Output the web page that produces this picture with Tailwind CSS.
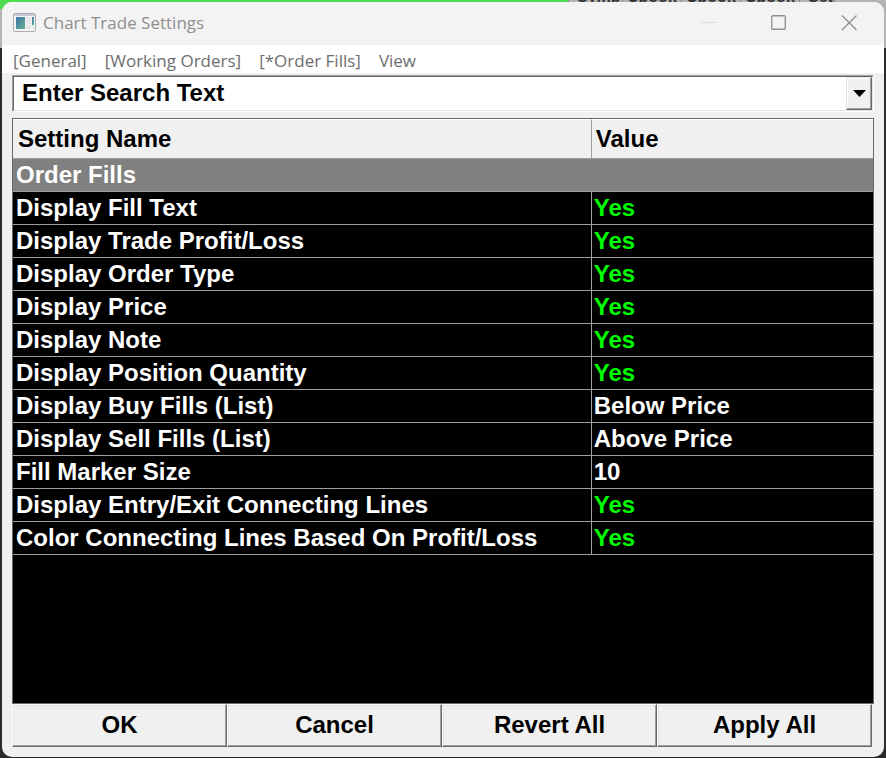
<!DOCTYPE html>
<html lang="en">
<head>
    <meta charset="UTF-8">
    <meta name="viewport" content="width=device-width, initial-scale=1.0">
    <title>Chart Trade Settings</title>
    <script src="https://cdn.jsdelivr.net/npm/@tailwindcss/browser@4"></script>
</head>
<body class="relative flex min-h-screen bg-[#2b2b2b] px-[2px] pt-[2px] pb-px font-['Liberation_Sans',Arial,sans-serif] text-black">
    <!-- application behind the dialog -->
    <div class="absolute inset-x-0 top-0 flex h-[48px] overflow-hidden bg-[#b4b4b4]" aria-hidden="true">
        <div class="h-[9px] w-[568px] bg-[#4fdc4f]"></div>
        <div class="-mt-[12px] flex h-[18px] flex-1 text-base leading-[18px] font-bold text-[#333]">
            <span class="w-[54px] border-l border-[#888] pl-2">Symb</span>
            <span class="w-[59px] border-l border-[#888] pl-1">Cbook</span>
            <span class="w-[59px] border-l border-[#888] pl-1">Cbook</span>
            <span class="w-[59px] border-l border-[#888] pl-1">Cbook</span>
            <span class="w-[36px] border-x border-[#888] pl-2">Set</span>
        </div>
    </div>

    <div class="relative flex flex-1 flex-col overflow-hidden rounded-[10px] bg-[#f0f0f0]">
        <header class="flex h-[43px] items-center bg-[#f3f3f3] pb-[2px] pl-[11px] font-['Open_Sans',sans-serif] text-[#8f8f8f]">
            <svg class="mr-[7px] h-[19px] w-[23px]" viewBox="0 0 23 19">
                <defs>
                    <linearGradient id="pane" x1="0" y1="0" x2="1" y2="1">
                        <stop offset="0" stop-color="#3f75ac"/>
                        <stop offset="1" stop-color="#62b292"/>
                    </linearGradient>
                </defs>
                <rect x="0.5" y="0.5" width="22" height="18" rx="1" fill="#f4f4f4" stroke="#a9adb2"/>
                <rect x="1" y="1" width="21" height="2" fill="#c5cbd1"/>
                <rect x="3" y="4" width="9" height="12" fill="url(#pane)"/>
                <rect x="13" y="4" width="5" height="7" fill="#e8e8e8"/>
                <rect x="13" y="12" width="5" height="4" fill="#e3e3e3"/>
                <rect x="19" y="4" width="2" height="8" fill="url(#pane)"/>
                <rect x="19" y="13" width="2" height="3" fill="#e3e3e3"/>
            </svg>
            <h1 class="flex-1 text-[17px] leading-6">Chart Trade Settings</h1>
            <button class="flex h-full w-[70px] items-center justify-center" aria-label="Minimize">
                <svg class="h-4 w-4" viewBox="0 0 16 16"><path d="M0.5 7.500h15" stroke="#dedede" fill="none"/></svg>
            </button>
            <button class="flex h-full w-[70px] items-center justify-center" aria-label="Maximize">
                <svg class="h-4 w-4" viewBox="0 0 16 16"><rect x="0.75" y="0.75" width="13.5" height="13.5" rx="1" fill="none" stroke="#8f8f8f" stroke-width="1.3"/></svg>
            </button>
            <button class="flex h-full w-[70px] items-center justify-center" aria-label="Close">
                <svg class="h-4 w-4" viewBox="0 0 16 16"><path d="M1 0.5l14.500 14.500M15.500 0.5l-14.500 14.500" stroke="#8f8f8f" stroke-width="1.3" fill="none"/></svg>
            </button>
        </header>

        <nav class="flex h-[28px] gap-[18px] bg-white pt-[4px] pl-[11px] font-['Open_Sans',sans-serif] text-[17px] leading-6 text-[#6d6d6d]">
            <button>[General]</button>
            <button>[Working Orders]</button>
            <button>[*Order Fills]</button>
            <button>View</button>
        </nav>

        <main class="flex flex-1 flex-col pt-[2px] pr-[10px] pb-[10px] pl-[10px] text-2xl font-bold">
            <div class="flex h-[37px] border border-t-[#a0a0a0] border-r-white border-b-white border-l-[#a0a0a0]">
                <div class="flex flex-1 border border-t-[#696969] border-r-[#e3e3e3] border-b-[#e3e3e3] border-l-[#696969] bg-white">
                    <input type="text" value="Enter Search Text" aria-label="Search settings" class="min-w-0 flex-1 pb-[2px] pl-[8px] leading-8 outline-none">
                    <button class="flex w-[26px] items-center justify-center border border-t-[#e3e3e3] border-r-[#696969] border-b-[#696969] border-l-[#e3e3e3] bg-[#f0f0f0] shadow-[inset_-1px_-1px_#a0a0a0,inset_1px_1px_#fff]" aria-label="Show search history">
                        <svg class="h-[7px] w-[13px]" viewBox="0 0 13 7"><path d="M0 0h13L6.5 7z"/></svg>
                    </button>
                </div>
            </div>

            <div class="mt-[6px] flex-1 border border-[#696969] bg-black">
                <table class="w-full table-fixed border-separate border-spacing-0 text-left text-white">
                    <thead class="bg-[#f0f0f0] text-black">
                        <tr class="h-[40px]">
                            <th class="w-[67.3%] border-t border-r border-b border-t-white border-r-[#a0a0a0] border-b-[#a0a0a0] pl-[5px]">Setting Name</th>
                            <th class="border-t border-b border-t-white border-b-[#a0a0a0] pl-[4px]">Value</th>
                        </tr>
                    </thead>
                    <tbody id="settings">
                        <tr class="h-[33px] bg-[#808080]">
                            <th colspan="2" class="border-b border-[#a0a0a0] pl-[3px] leading-8">Order Fills</th>
                        </tr>
                    </tbody>
                </table>
            </div>

            <div class="mr-[2px] grid h-[43px] grid-cols-4">
                <button class="border border-t-white border-r-[#696969] border-b-[#696969] border-l-white pb-[2px] shadow-[inset_-1px_-1px_#a0a0a0,inset_1px_1px_#e3e3e3]">OK</button>
                <button class="border border-t-white border-r-[#696969] border-b-[#696969] border-l-white pb-[2px] shadow-[inset_-1px_-1px_#a0a0a0,inset_1px_1px_#e3e3e3]">Cancel</button>
                <button class="border border-t-white border-r-[#696969] border-b-[#696969] border-l-white pb-[2px] shadow-[inset_-1px_-1px_#a0a0a0,inset_1px_1px_#e3e3e3]">Revert All</button>
                <button class="border border-t-white border-r-[#696969] border-b-[#696969] border-l-white pb-[2px] shadow-[inset_-1px_-1px_#a0a0a0,inset_1px_1px_#e3e3e3]">Apply All</button>
            </div>
        </main>
    </div>

    <script>
        const settings = [
            ['Display Fill Text', 'Yes'],
            ['Display Trade Profit/Loss', 'Yes'],
            ['Display Order Type', 'Yes'],
            ['Display Price', 'Yes'],
            ['Display Note', 'Yes'],
            ['Display Position Quantity', 'Yes'],
            ['Display Buy Fills (List)', 'Below Price'],
            ['Display Sell Fills (List)', 'Above Price'],
            ['Fill Marker Size', '10'],
            ['Display Entry/Exit Connecting Lines', 'Yes'],
            ['Color Connecting Lines Based On Profit/Loss', 'Yes'],
        ];

        const body = document.getElementById('settings');
        settings.forEach(([name, value]) => {
            const color = value === 'Yes' ? 'text-[#00ff00]' : 'text-white';
            body.insertAdjacentHTML('beforeend', `
                <tr class="h-[33px]">
                    <td class="border-r border-b border-[#a0a0a0] pl-[3px] leading-8">${name}</td>
                    <td class="border-b border-[#a0a0a0] pl-[2px] leading-8 ${color}">${value}</td>
                </tr>
            `);
        });
    </script>
</body>
</html>
